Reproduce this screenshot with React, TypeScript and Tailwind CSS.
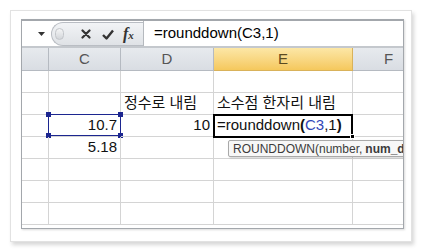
import React from 'react'

const font = { fontFamily: '"Liberation Sans", "Noto Sans CJK KR", sans-serif' }

const Cell = ({ children, className = '' }: { children?: React.ReactNode; className?: string }) => (
  <div className={`relative h-[22px] border-r border-b border-[#d4d4d4] flex items-center px-[3px] text-[15px] text-[#111] whitespace-nowrap ${className}`}>
    {children}
  </div>
)

const Header = ({ label, active = false }: { label: string; active?: boolean }) => (
  <div
    className={`h-[23px] flex items-center justify-center border-r border-b text-[15px] ${
      active
        ? 'bg-gradient-to-b from-[#fce7a6] to-[#f5c85c] border-[#d9b25a] text-[#5a4a20]'
        : 'bg-gradient-to-b from-[#e7eaee] to-[#d9dde3] border-[#b5bac1] text-[#555]'
    }`}
  >
    {label}
  </div>
)

const FormulaBar = () => (
  <div className="h-[27px] flex bg-white border-b-2 border-[#c4c8cd]">
    <div className="w-[29px] flex items-center justify-end pr-[6px]">
      <svg width="7" height="4" viewBox="0 0 7 4">
        <path d="M0 0h7L3.5 4z" fill="#333" />
      </svg>
    </div>
    <div className="w-[92px] mt-[1px] flex items-center rounded-l-full border border-r-0 border-[#b9bdc3] bg-gradient-to-b from-[#f2f4f6] to-[#dfe2e6]">
      <div className="ml-[3px] w-[9px] h-[12px] rounded-full border border-[#c3c6ca] bg-gradient-to-b from-[#f4f5f6] to-[#d3d6da]" />
      <svg className="ml-[17px]" width="10" height="10" viewBox="0 0 10 10">
        <path d="M1.5 1.5l7 7M8.5 1.5l-7 7" stroke="#333" strokeWidth="2.2" strokeLinecap="round" />
      </svg>
      <svg className="ml-[11px]" width="12" height="11" viewBox="0 0 12 11">
        <path d="M1 6l3.5 3.5L11 1.5" stroke="#333" strokeWidth="2.4" fill="none" strokeLinejoin="round" />
      </svg>
      <span className="ml-[9px] text-[16px] italic font-bold text-[#333] leading-none" style={{ fontFamily: '"Liberation Serif", serif' }}>
        f<span className="text-[11px]">x</span>
      </span>
    </div>
    <div className="flex-1 flex items-center pl-[10px] border-l border-[#b5b9be] text-[15px] text-black whitespace-nowrap">
      =rounddown(C3,1)
    </div>
  </div>
)

export default function App() {
  return (
    <div className="w-[424px] h-[250px] bg-white overflow-hidden" style={font}>
      <div className="ml-[10px] mt-[10px] w-[402px] h-[232px] bg-white border border-[#e2e2e2] shadow-[2px_3px_4px_rgba(0,0,0,0.16)] pl-[10px] pt-[8px]">
        <div className="w-[383px] h-[210px] overflow-hidden border-x border-b border-t-2 border-[#a3a7ac] shadow-[1px_1px_2px_rgba(0,0,0,0.15)] bg-white">
          <FormulaBar />
          <div className="grid grid-cols-[27px_72px_93px_139px_72px] w-[403px]">
            <Header label="" />
            <Header label="C" />
            <Header label="D" />
            <Header label="E" active />
            <Header label="F" />

            <Cell /><Cell /><Cell /><Cell /><Cell />

            <Cell /><Cell />
            <Cell className="overflow-visible">정수로 내림</Cell>
            <Cell>소수점 한자리 내림</Cell>
            <Cell />

            <Cell />
            <Cell className="justify-end">
              10.7
              <div className="absolute -left-px -top-px w-[73px] h-[22px] border border-[#1c2690]">
                <span className="absolute -left-[3px] -top-[3px] w-[5px] h-[5px] bg-[#1c2690]" />
                <span className="absolute -right-[3px] -top-[3px] w-[5px] h-[5px] bg-[#1c2690]" />
                <span className="absolute -left-[3px] -bottom-[3px] w-[5px] h-[5px] bg-[#1c2690]" />
                <span className="absolute -right-[3px] -bottom-[3px] w-[5px] h-[5px] bg-[#1c2690]" />
              </div>
            </Cell>
            <Cell className="justify-end">10</Cell>
            <Cell className="z-10">
              <div className="absolute -left-px -top-px w-[140px] h-[24px] border-2 border-black" />
              <span className="absolute right-[-3px] bottom-[-3px] w-[5px] h-[5px] bg-black border border-white" />
              <span>
                =rounddown<b>(</b>
                <span className="text-[#3246b8]">C3</span>,1<b>)</b>
              </span>
              <div className="absolute left-[14px] top-[25px] h-[17px] w-[200px] flex items-center pl-[4px] bg-[#f7f7f7] border border-[#a9a9a9] rounded-[2px] shadow-[1px_1px_2px_rgba(0,0,0,0.18)] text-[12px] text-[#3c3c3c]">
                ROUNDDOWN(number, <b className="ml-[3px]">num_digits</b>)
              </div>
            </Cell>
            <Cell />

            <Cell /><Cell className="justify-end">5.18</Cell><Cell /><Cell /><Cell />
            <Cell /><Cell /><Cell /><Cell /><Cell />
            <Cell /><Cell /><Cell /><Cell /><Cell />
            <Cell /><Cell /><Cell /><Cell /><Cell />
          </div>
        </div>
      </div>
    </div>
  )
}
